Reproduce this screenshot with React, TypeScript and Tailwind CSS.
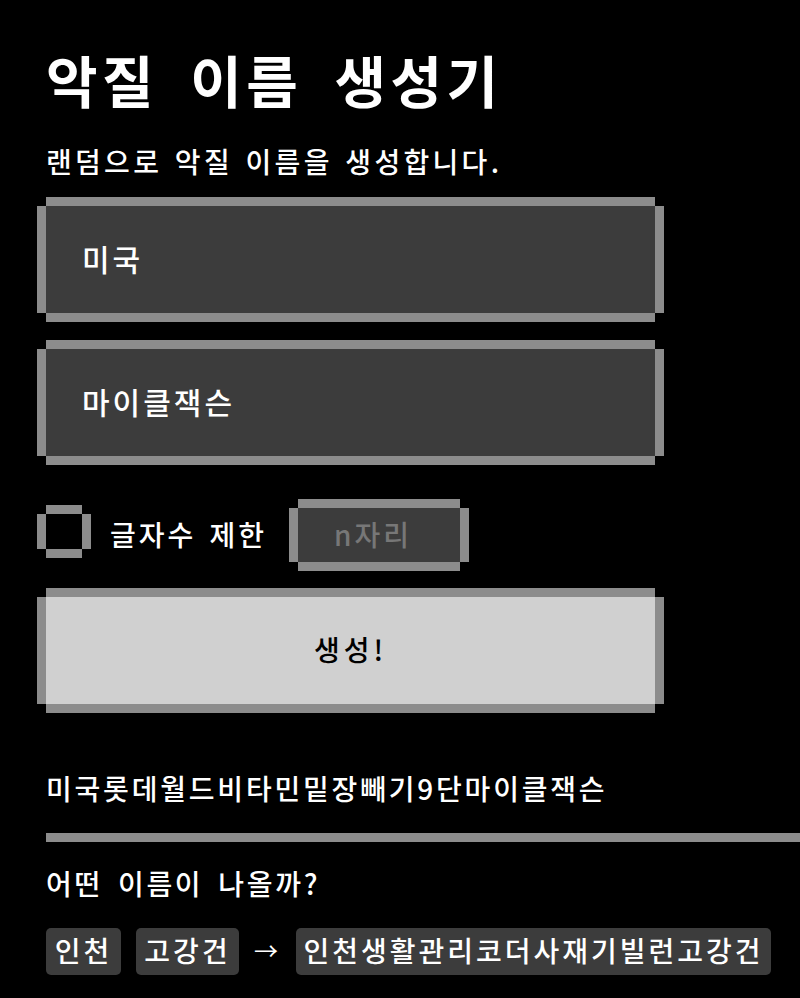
const pixelBorder =
  'shadow-[9px_0_0_#8c8c8c,-9px_0_0_#8c8c8c,0_9px_0_#8c8c8c,0_-9px_0_#8c8c8c]';

const App = () => {
  return (
    <div className="min-h-[998px] w-[800px] overflow-hidden bg-black pl-[46px] pt-[42px] font-['Noto_Sans_CJK_KR',sans-serif] text-white">
      {/* Header */}
      <h1 className="h-[76px] text-[56px] font-bold leading-[74px] tracking-[4.5px] [word-spacing:15px] whitespace-nowrap">
        악질 이름 생성기
      </h1>
      <p className="mt-[27px] h-[36px] text-[28px] font-medium leading-[33px] tracking-[3.3px] [word-spacing:3px] whitespace-nowrap">
        랜덤으로 악질 이름을 생성합니다.
      </p>

      {/* Inputs */}
      <input
        defaultValue="미국"
        className={`mt-[25px] block h-[107px] w-[609px] bg-[#3c3c3c] pb-[3px] pl-[36px] text-[30px] font-medium tracking-[3px] text-white outline-none ${pixelBorder}`}
      />
      <input
        defaultValue="마이클잭슨"
        className={`mt-[36px] block h-[107px] w-[609px] bg-[#3c3c3c] pb-[3px] pl-[36px] text-[30px] font-medium tracking-[3px] text-white outline-none ${pixelBorder}`}
      />

      {/* Limit row */}
      <div className="mt-[52px] flex h-[54px] items-center">
        <input
          type="checkbox"
          className={`mb-[7px] block h-[35px] w-[36px] appearance-none bg-black ${pixelBorder}`}
        />
        <label className="mb-[3px] ml-[28px] w-[188px] text-[28px] font-medium tracking-[3px] [word-spacing:4px] whitespace-nowrap">
          글자수 제한
        </label>
        <input
          placeholder="n자리"
          className={`block h-[54px] w-[162px] bg-[#3c3c3c] pb-[3px] pl-[36px] text-[28px] font-medium tracking-[3px] outline-none placeholder:text-[#777777] ${pixelBorder}`}
        />
      </div>

      {/* Generate */}
      <button
        type="button"
        className={`mt-[35px] block h-[107px] w-[609px] bg-[#d0d0d0] pb-[3px] text-[28px] font-medium tracking-[4px] text-black ${pixelBorder}`}
      >
        생성!
      </button>

      {/* Result */}
      <p className="mt-[68px] h-[36px] text-[28px] font-medium leading-[33px] tracking-[2.8px] whitespace-nowrap">
        미국롯데월드비타민밑장빼기9단마이클잭슨
      </p>
      <hr className="mt-[25px] h-[9px] border-0 bg-[#8c8c8c]" />

      {/* Example */}
      <p className="mt-[25px] h-[36px] text-[28px] font-medium leading-[33px] tracking-[2.7px] [word-spacing:6px] whitespace-nowrap">
        어떤 이름이 나올까?
      </p>
      <div className="mt-[25px] flex h-[47px] items-center text-[28px] font-medium tracking-[3px] whitespace-nowrap">
        <span className="flex h-[47px] w-[75px] items-center justify-center rounded-[5px] bg-[#3c3c3c] pb-[3px]">
          인천
        </span>
        <span className="ml-[15px] flex h-[47px] w-[103px] items-center justify-center rounded-[5px] bg-[#3c3c3c] pb-[3px]">
          고강건
        </span>
        <span className="flex w-[57px] items-center justify-center pb-[3px] text-[24px] font-normal">→</span>
        <span className="flex h-[47px] w-[475px] items-center justify-center rounded-[5px] bg-[#3c3c3c] pb-[3px]">
          인천생활관리코더사재기빌런고강건
        </span>
      </div>
    </div>
  );
};

export default App;
